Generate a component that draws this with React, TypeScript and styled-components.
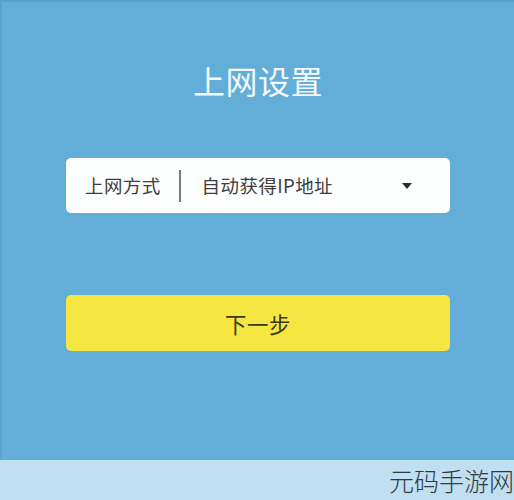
import React from "react";
import styled, { createGlobalStyle } from "styled-components";

const Global = createGlobalStyle`
  html, body { margin: 0; padding: 0; }
  body { font-family: "Noto Sans CJK SC", "Noto Sans", sans-serif; }
`;

const Page = styled.div`
  width: 514px;
  height: 500px;
  display: flex;
  flex-direction: column;
  overflow: hidden;
`;

const Main = styled.main`
  height: 460px;
  background: #62aed9;
  border-top: 2px solid #5a9fcb;
  border-left: 2px solid #5aa3cf;
  box-sizing: border-box;
  display: flex;
  flex-direction: column;
  align-items: center;
  padding: 60px 63px 0 63px;
`;

const Title = styled.h1`
  margin: 0;
  font-size: 32px;
  line-height: 36px;
  font-weight: 400;
  color: #f4f8fb;
  letter-spacing: 0.5px;
`;

const Field = styled.div`
  margin-top: 60px;
  width: 384px;
  height: 55px;
  box-sizing: border-box;
  background: #fdfefe;
  border-radius: 5px;
  display: flex;
  align-items: center;
  padding: 0 20px 0 19px;
`;

const Label = styled.span`
  font-size: 18.5px;
  letter-spacing: 0.4px;
  color: #3d3d3d;
  line-height: 1;
`;

const Divider = styled.span`
  width: 2px;
  height: 32px;
  background: #7a7a7a;
  margin: 0 21px 0 18px;
`;

const Value = styled.span`
  flex: 1;
  font-size: 18.5px;
  letter-spacing: 0.4px;
  color: #3d3d3d;
  line-height: 1;
`;

const Caret = styled.span`
  width: 0;
  height: 0;
  border-left: 5px solid transparent;
  border-right: 5px solid transparent;
  border-top: 6px solid #2b2b2b;
  margin-right: 18px;
`;

const NextButton = styled.button`
  margin-top: 82px;
  width: 384px;
  height: 56px;
  border: none;
  border-radius: 5px;
  background: #f6e641;
  color: #3b3a1c;
  font-family: "Noto Sans CJK SC", sans-serif;
  font-size: 21.5px;
  letter-spacing: 0.5px;
  padding: 0;
  display: flex;
  align-items: center;
  justify-content: center;
`;

const Footer = styled.footer`
  height: 40px;
  background: #c0dff1;
  display: flex;
  justify-content: flex-end;
  align-items: center;
  overflow: hidden;
`;

const Watermark = styled.span`
  font-size: 25px;
  font-weight: 300;
  color: #2f3a42;
  white-space: nowrap;
  margin-right: 0;
  line-height: 1;
`;

export default function App() {
  return (
    <>
      <Global />
      <Page>
        <Main>
          <Title>上网设置</Title>
          <Field>
            <Label>上网方式</Label>
            <Divider />
            <Value>自动获得IP地址</Value>
            <Caret />
          </Field>
          <NextButton>下一步</NextButton>
        </Main>
        <Footer>
          <Watermark>元码手游网</Watermark>
        </Footer>
      </Page>
    </>
  );
}
